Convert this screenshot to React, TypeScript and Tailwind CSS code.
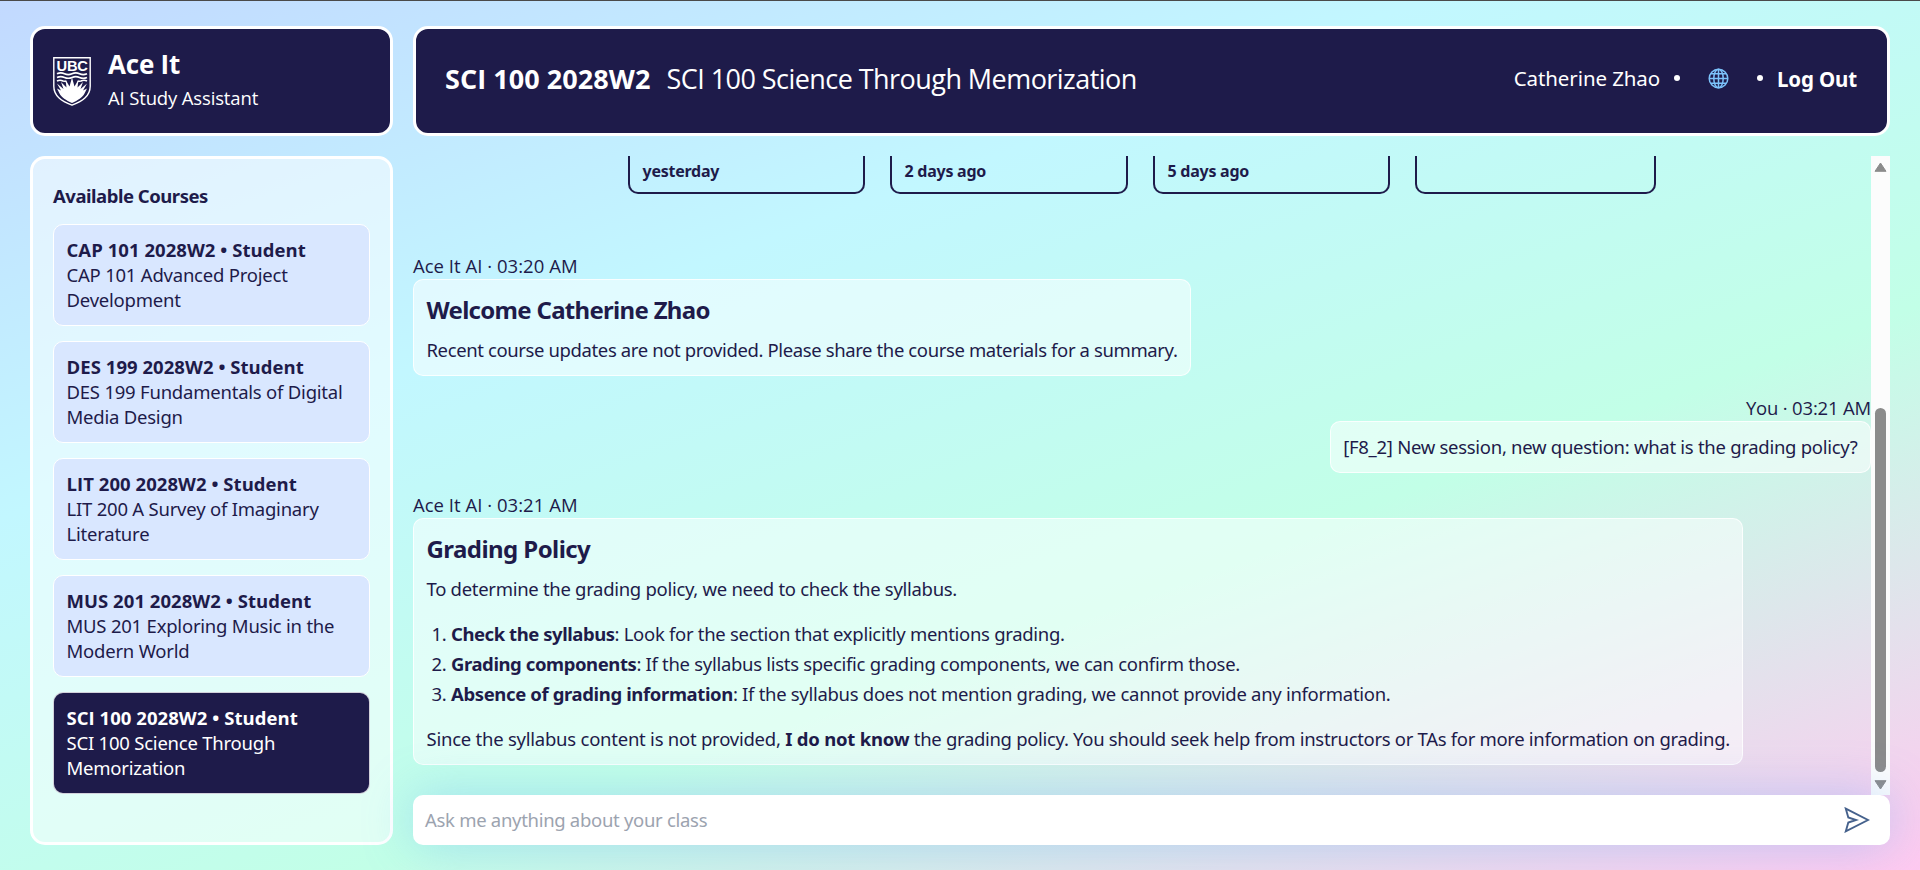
import React from "react";

type Course = { code: string; title: string; active?: boolean };

const courses: Course[] = [
  { code: "CAP 101 2028W2", title: "CAP 101 Advanced Project Development" },
  { code: "DES 199 2028W2", title: "DES 199 Fundamentals of Digital Media Design" },
  { code: "LIT 200 2028W2", title: "LIT 200 A Survey of Imaginary Literature" },
  { code: "MUS 201 2028W2", title: "MUS 201 Exploring Music in the Modern World" },
  { code: "SCI 100 2028W2", title: "SCI 100 Science Through Memorization", active: true },
];

function Shield() {
  return (
    <svg className="mt-[10px] h-[49px] w-[38px] shrink-0 overflow-visible" viewBox="0 0 38 49" fill="none">
      <path d="M.8.8h36.4v28.4c0 9.6-7.4 14.6-18.2 19C8.200 43.800.8 38.800.8 29.200Z" stroke="#fff" strokeWidth="1.4" />
      <text x="3.600" y="13.600" textLength="31" lengthAdjust="spacingAndGlyphs" fill="#fff" fontFamily="Liberation Sans, sans-serif" fontWeight="700" fontSize="14.5">UBC</text>
      <g stroke="#fff" strokeWidth="1.700">
        <path d="M4 16.800q3.750-1.700 7.500 0t7.500 0 7.500 0 7.500 0" />
        <path d="M4 20.400q3.750-1.700 7.500 0t7.500 0 7.500 0 7.500 0" />
        <path d="M4 24q3-1.500 6 0l3.500.5M34 24q-3-1.500-6 0l-3.500.5" />
      </g>
      <path
        fill="#fff"
        d="M19 46c-6-2.700-10.500-5.500-12.500-9.500L4 31.500l4 2L4 26.500l6.500 5.500-2.500-7 5.500 5.500-1-8 4 7L19 20.500l2.500 9 4-7-1 8 5.500-5.500-2.500 7 6.500-5.500-4 7 4-2-2.500 5C29.500 40.500 25 43.300 19 46Z"
      />
    </svg>
  );
}

function Globe() {
  return (
    <svg className="h-[21px] w-[21px]" viewBox="0 0 21 21" fill="none" stroke="#7cc3fb" strokeWidth="1.500">
      <circle cx="10.500" cy="10.500" r="9.300" />
      <ellipse cx="10.500" cy="10.500" rx="4.700" ry="9.300" />
      <path d="M10.500 1v19M1.200 10.500h18.600M2.800 5.700h15.400M2.800 15.300h15.400" />
    </svg>
  );
}

function Dot() {
  return <span className="block h-[6px] w-[6px] rounded-full bg-white" />;
}

function CourseCard({ code, title, active }: Course) {
  return (
    <div
      className={
        active
          ? "h-[102px] rounded-[10px] border border-white/80 bg-[#1e1b4a] px-[12.5px] py-[12px] text-white"
          : "h-[102px] rounded-[10px] border border-white bg-[#d9e7ff] px-[12.5px] py-[12px]"
      }
    >
      <div className="font-['Open_Sans',sans-serif] font-bold tracking-[0.05px]">{code} • Student</div>
      <div className="tracking-[-0.22px]">{title}</div>
    </div>
  );
}

function Suggestion({ label, width }: { label: string; width: string }) {
  return (
    <div className={`${width} flex h-[38px] items-start rounded-b-[10px] border-2 border-t-0 border-[#1e1b4a] px-[12.5px] pt-[4px] text-[16px] leading-[22px] font-bold tracking-[-0.25px]`}>
      {label}
    </div>
  );
}

const bubble = "w-fit rounded-[10px] border border-white/80 bg-white/50 px-[12.5px] pb-[12.5px]";

export default function App() {
  return (
    <div className="h-[870px] w-[1920px] overflow-hidden border-t border-[#4a4a4a] bg-[linear-gradient(160deg,#c2d9ff_0%,#c2f7ff_33%,#c2ffe7_64%,#ffc9f0_100%)] px-[30px] pt-[25px] pb-[25px] font-['Noto_Sans','Open_Sans',sans-serif] text-[18.5px] leading-[25px] tracking-[-0.28px] text-[#1e1b4a]">
      <div className="flex h-full gap-[20px]">
        <aside className="flex w-[363px] shrink-0 flex-col gap-[20px]">
          <div className="flex h-[110px] shrink-0 gap-[17px] rounded-[15px] border-3 border-white bg-[#1e1b4a] pt-[18px] pl-[20px] font-['Open_Sans',sans-serif] text-white">
            <Shield />
            <div className="pt-px">
              <div className="text-[26px] leading-[32px] font-bold tracking-[-0.2px]">Ace It</div>
              <div className="mt-[5px] tracking-[-0.15px]">AI Study Assistant</div>
            </div>
          </div>
          <div className="flex flex-1 flex-col rounded-[15px] border-3 border-white bg-white/50 px-[20px] pt-[24px]">
            <h2 className="font-bold tracking-[-0.48px]">Available Courses</h2>
            <div className="mt-[16px] flex flex-col gap-[15px]">
              {courses.map((c) => (
                <CourseCard key={c.code} {...c} />
              ))}
            </div>
          </div>
        </aside>

        <main className="flex w-[1477px] flex-col">
          <header className="mb-[20px] flex h-[110px] shrink-0 items-center justify-between rounded-[15px] border-3 border-white bg-[#1e1b4a] pr-[30px] pb-[6px] pl-[29px] text-white">
            <div className="flex items-center gap-[16px] pt-[2px] font-['Open_Sans',sans-serif] text-[27px] leading-[36px]">
              <span className="font-bold tracking-[0.06px]">SCI 100 2028W2</span>
              <span className="tracking-[-0.55px]">SCI 100 Science Through Memorization</span>
            </div>
            <div className="flex items-center text-[20.5px]">
              <span className="mr-[14px] tracking-[-0.1px]">Catherine Zhao</span>
              <Dot />
              <span className="mx-[28px]">
                <Globe />
              </span>
              <Dot />
              <span className="ml-[14px] pt-[2px] font-bold tracking-[-0.15px]">Log Out</span>
            </div>
          </header>

          <div className="flex h-[639px] shrink-0">
            <div className="w-[1458px] shrink-0">
              <div className="ml-[215px] flex gap-[25px]">
                <Suggestion label="yesterday" width="w-[237px]" />
                <Suggestion label="2 days ago" width="w-[238px]" />
                <Suggestion label="5 days ago" width="w-[237px]" />
                <Suggestion label="" width="w-[241px]" />
              </div>

              <div className="mt-[59px] mb-px font-['Open_Sans',sans-serif] tracking-[0.03px]">Ace It AI · 03:20 AM</div>
              <div className={`${bubble} pt-[14.5px]`}>
                <h3 className="text-[24px] leading-[30px] font-bold tracking-[-0.7px]">Welcome Catherine Zhao</h3>
                <p className="mt-[12.5px] tracking-[-0.385px]">Recent course updates are not provided. Please share the course materials for a summary.</p>
              </div>

              <div className="mt-[19px] flex flex-col items-end">
                <div className="mb-px font-['Open_Sans',sans-serif] tracking-[-0.18px]">You · 03:21 AM</div>
                <div className={`${bubble} pt-[12.5px] tracking-[-0.285px]`}>[F8_2] New session, new question: what is the grading policy?</div>
              </div>

              <div className="mt-[19px] mb-px font-['Open_Sans',sans-serif] tracking-[0.03px]">Ace It AI · 03:21 AM</div>
              <div className={`${bubble} pt-[15px]`}>
                <h3 className="text-[24px] leading-[30px] font-bold tracking-[-0.57px]">Grading Policy</h3>
                <p className="mt-[12.5px] tracking-[-0.3px]">To determine the grading policy, we need to check the syllabus.</p>
                <ol className="mt-[17.5px] list-decimal pl-[24.5px] leading-[30px] tracking-[-0.3px]">
                  <li><b className="font-bold tracking-[-0.45px]">Check the syllabus</b>: Look for the section that explicitly mentions grading.</li>
                  <li><b className="font-bold tracking-[-0.42px]">Grading components</b>: If the syllabus lists specific grading components, we can confirm those.</li>
                  <li><b className="font-bold tracking-[-0.37px]">Absence of grading information</b>: If the syllabus does not mention grading, we cannot provide any information.</li>
                </ol>
                <p className="mt-[17.5px]">
                  <span className="tracking-[-0.24px]">Since the syllabus content is not provided, </span><b className="font-bold tracking-[-0.22px]">I do not know</b><span className="tracking-[-0.32px]"> the grading policy. You should seek help from instructors or TAs for more information on grading.</span>
                </p>
              </div>
            </div>

            <div className="flex w-[19px] shrink-0 flex-col items-center bg-[#fcfcfc] pt-[6px] pb-[5px]">
              <svg className="h-[10px] w-[13px]" viewBox="0 0 13 10" fill="#8b8b8b" stroke="#8b8b8b" strokeLinejoin="round">
                <path d="M6.500 1 12 9.300H1Z" />
              </svg>
              <div className="mt-[236px] h-[364px] w-[11px] rounded-full bg-[#8b8b8b]" />
              <svg className="mt-[8px] h-[10px] w-[13px]" viewBox="0 0 13 10" fill="#8b8b8b" stroke="#8b8b8b" strokeLinejoin="round">
                <path d="M6.500 9 12 .7H1Z" />
              </svg>
            </div>
          </div>

          <div className="relative flex h-[50px] shrink-0 items-center justify-between rounded-[10px] bg-white pr-[20px] pl-[12px] shadow-[0_0_50px_rgba(96,165,250,0.36)]">
            <span className="pb-px tracking-[-0.3px] text-[#9ca3af]">Ask me anything about your class</span>
            <svg className="h-[26px] w-[26px]" viewBox="0 0 26 26" fill="none" stroke="#45618c" strokeWidth="1.900">
              <path d="M1.800 1.700 24 13 1.800 24.300 4.300 15.500 12 13 4.300 10.500Z" />
            </svg>
          </div>
        </main>
      </div>
    </div>
  );
}
